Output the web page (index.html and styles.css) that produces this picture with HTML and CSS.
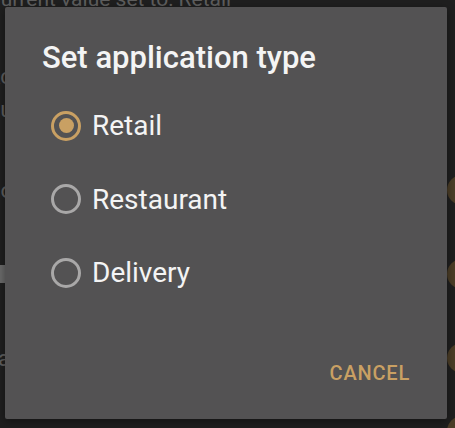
FILE: index.html
```html
<!DOCTYPE html>
<html lang="en">
<head>
    <meta charset="UTF-8">
    <meta name="viewport" content="width=device-width, initial-scale=1.0">
    <title>Settings</title>
    <link rel="stylesheet" href="styles.css">
</head>
<body>
    <div class="screen">
        <div class="settings">
            <div class="summary">Current value set to: Retail</div>
            <div class="row first">
                <span class="row-label">Ac</span>
                <span class="row-label">Cu</span>
            </div>
            <div class="row"><span class="row-label">Do</span><span class="thumb"></span></div>
            <div class="row"><span class="row-label mark"></span><span class="thumb"></span></div>
            <div class="row"><span class="row-label">Ta</span><span class="thumb"></span></div>
            <div class="row"><span class="row-label"></span><span class="thumb"></span></div>
        </div>

        <div class="dialog">
            <h1>Set application type</h1>

            <div class="options">
                <label class="option">
                    <span class="radio checked"></span>
                    <span>Retail</span>
                </label>
                <label class="option">
                    <span class="radio"></span>
                    <span>Restaurant</span>
                </label>
                <label class="option">
                    <span class="radio"></span>
                    <span>Delivery</span>
                </label>
            </div>

            <div class="actions">
                <button>CANCEL</button>
            </div>
        </div>
    </div>
</body>
</html>
```

FILE: styles.css
```css
body {
    margin: 0;
    background-color: #1f1f1f;
    font-family: Roboto, "Liberation Sans", sans-serif;
    overflow: hidden;
}

.screen {
    position: relative;
    width: 455px;
    height: 428px;
    overflow: hidden;
}

/* dimmed settings list behind the dialog */
.settings {
    color: #5e5e5e;
}

.summary {
    margin-top: -13px;
    margin-left: -13px;
    font-size: 21px;
    line-height: 24px;
    white-space: nowrap;
}

.row {
    display: flex;
    align-items: center;
    justify-content: space-between;
    height: 84px;
    margin-left: -14px;
    font-size: 22px;
}

.row.first {
    height: 137px;
    flex-direction: column;
    align-items: flex-start;
    justify-content: flex-start;
    padding-top: 52px;
    box-sizing: border-box;
    gap: 6px;
    line-height: 27px;
}

.row-label.mark {
    width: 19px;
    height: 18px;
    background-color: #6a6a6a;
}

.thumb {
    width: 30px;
    height: 30px;
    border-radius: 50%;
    background-color: #4b3d27;
    margin-right: -22px;
}

.row:last-child .thumb {
    margin-top: -22px;
}

.dialog {
    position: absolute;
    left: 5px;
    top: 7px;
    width: 442px;
    height: 412px;
    box-sizing: border-box;
    background-color: #535253;
    border-radius: 2px;
    box-shadow: 0 2px 8px rgba(0,0,0,0.4);
    padding: 31px 37px 0 37px;
    display: flex;
    flex-direction: column;
}

h1 {
    margin: 0;
    color: #f4f4f4;
    font-size: 31px;
    font-weight: 500;
    line-height: 40px;
}

.options {
    margin-top: 11px;
    margin-left: 9px;
    display: flex;
    flex-direction: column;
}

.option {
    display: flex;
    align-items: center;
    gap: 11px;
    height: 73.5px;
    color: #f4f4f4;
    font-size: 28px;
}

.radio {
    width: 30px;
    height: 30px;
    box-sizing: border-box;
    border: 3px solid #a9a8a8;
    border-radius: 50%;
    display: flex;
    align-items: center;
    justify-content: center;
}

.radio.checked {
    border-color: #c9a063;
}

.radio.checked::after {
    content: "";
    width: 15px;
    height: 15px;
    border-radius: 50%;
    background-color: #c9a063;
}

.actions {
    margin-top: auto;
    display: flex;
    justify-content: flex-end;
    padding-bottom: 34px;
}

button {
    background: none;
    border: none;
    padding: 0;
    color: #c9a063;
    font-family: Roboto, "Liberation Sans", sans-serif;
    font-size: 20px;
    font-weight: 500;
    letter-spacing: 0.8px;
    line-height: 24px;
    cursor: pointer;
}
```
